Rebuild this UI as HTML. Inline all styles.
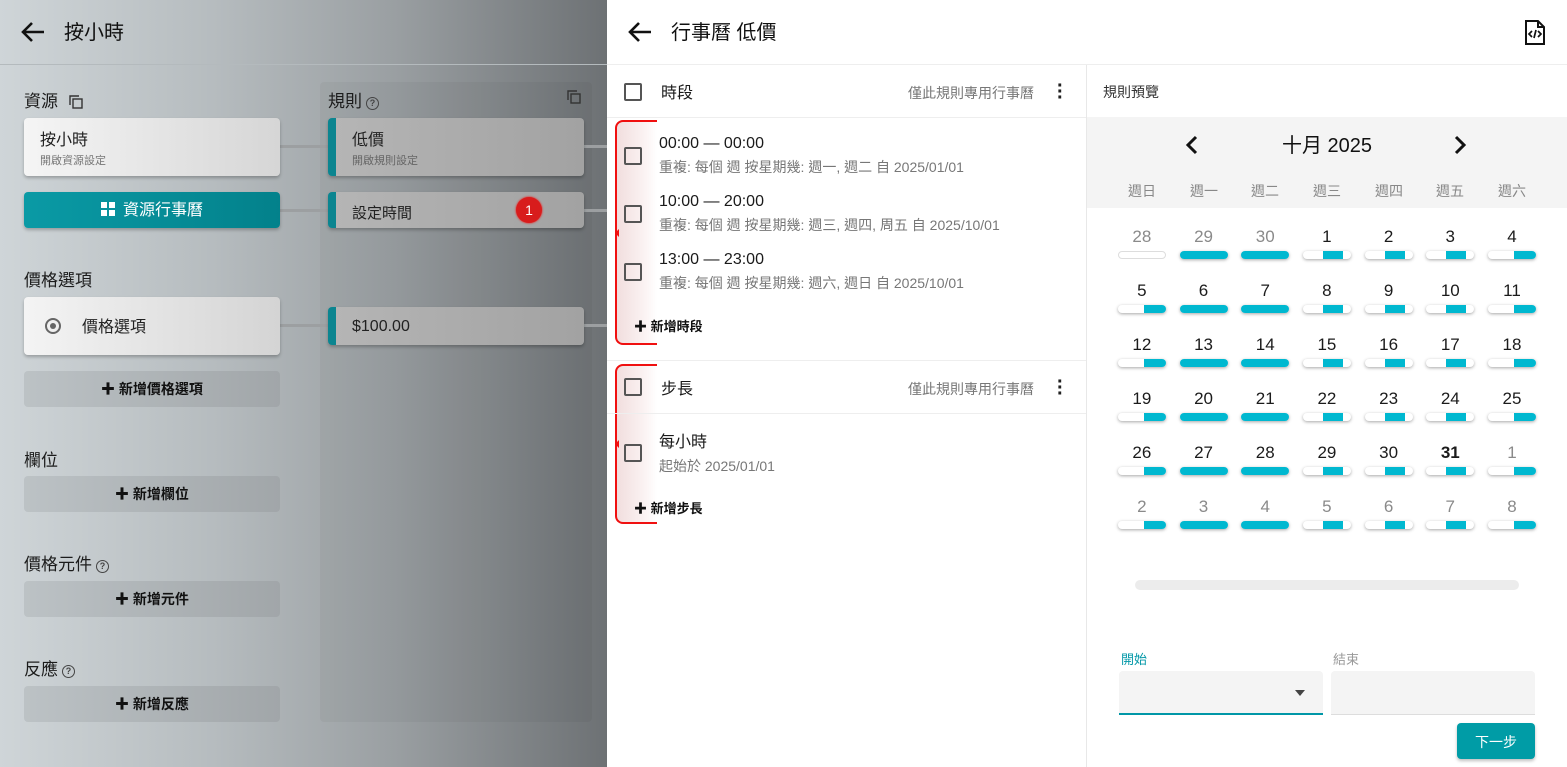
<!DOCTYPE html>
<html><head><meta charset="utf-8"><style>
*{box-sizing:border-box;margin:0;padding:0}
body{width:1567px;height:767px;overflow:hidden;position:relative;font-family:"Liberation Sans","Noto Sans CJK TC",sans-serif;color:#212121;background:#fff;line-height:1.15}
.a{position:absolute}
#left{left:0;top:0;width:607px;height:767px;background:linear-gradient(90deg,#cfd5d8 0%,#b6bcbf 35%,#9a9fa2 65%,#6d7174 100%)}
.card{position:absolute;border-radius:4px;box-shadow:0 2px 3px rgba(0,0,0,.25)}
.rc{background:linear-gradient(90deg,#b5b5b5,#a2a2a2);border-left:8px solid #0b8590}
.btn{position:absolute;left:24px;width:256px;height:36px;border-radius:4px;background:linear-gradient(90deg,#bcc2c5,#a1a6a9);font-size:14px;font-weight:bold;text-align:center;line-height:36px;color:#111}
.lbl{position:absolute;left:24px;font-size:17px;color:#1c1c1c}
.q{display:inline-block;width:13px;height:13px;border:1.5px solid #444;border-radius:50%;font-size:9px;line-height:10px;text-align:center;font-weight:bold;vertical-align:1px;margin-left:4px;color:#444}
.line{position:absolute;height:3px;background:#9c9fa1}
.cb{position:absolute;width:18px;height:18px;border:2px solid #555;border-radius:2px}
.t1{position:absolute;font-size:16px;color:#1a1a1a}
.t2{position:absolute;font-size:14px;color:#777}
.add{position:absolute;font-size:13px;font-weight:bold;color:#111}
.br{position:absolute;left:615px;width:42px;border:2px solid #f01010;border-right:none;border-radius:8px 0 0 8px;background:linear-gradient(90deg,#f1dede,#fbf3f3 70%,rgba(255,255,255,0))}
.br:after{content:"";position:absolute;left:-6px;top:50%;margin-top:-4px;border:4px solid transparent;border-right:4px solid #f01010}
#grid{position:absolute;left:1111px;top:227px;width:432px;display:grid;grid-template-columns:repeat(7,61.7px);grid-auto-rows:54px}
.d{text-align:center;font-size:17px;position:relative;color:#1b1b1b}
.d.o{color:#8a8a8a}
.bar{position:absolute;left:7px;top:24px;width:48px;height:8px;border-radius:4px;background:#fff;box-shadow:0 1px 3px rgba(0,0,0,.35);overflow:hidden}
.bar i{position:absolute;top:0;height:8px;background:#00b8d0}
.F i{left:0;width:48px}.W i{left:20px;width:20px}.S i{left:26px;width:22px}
.E{box-shadow:none;border:1px solid #ddd}
.wd{position:absolute;top:183px;font-size:14px;color:#888;width:62px;text-align:center}
</style></head><body>
<div id="left" class="a">
 <div class="a" style="left:0;top:64px;width:607px;height:1px;background:#b4babd"></div>
 <svg class="a" style="left:20px;top:21px" width="26" height="22" viewBox="0 0 26 22"><path d="M24 11H4M12 2L3 11l9 9" stroke="#111" stroke-width="2.6" fill="none"/></svg>
 <div class="a" style="left:64px;top:22px;font-size:20px;color:#111">按小時</div>
 <div class="a" style="left:320px;top:82px;width:272px;height:640px;background:rgba(0,0,0,.035);border-radius:4px"></div>
 <div class="lbl" style="top:92px">資源 <svg style="vertical-align:-2px;margin-left:6px" width="14" height="14" viewBox="0 0 14 14"><rect x="4" y="4" width="9" height="9" fill="none" stroke="#333" stroke-width="1.4"/><path d="M1 10V1h9" fill="none" stroke="#333" stroke-width="1.4"/></svg></div>
 <div class="lbl" style="left:328px;top:92px">規則<span class="q">?</span></div>
 <svg class="a" style="left:567px;top:90px" width="14" height="14" viewBox="0 0 14 14"><rect x="4" y="4" width="9" height="9" fill="none" stroke="#333" stroke-width="1.4"/><path d="M1 10V1h9" fill="none" stroke="#333" stroke-width="1.4"/></svg>
 <div class="line" style="left:280px;top:145px;width:48px"></div><div class="line" style="left:584px;top:145px;width:23px"></div>
 <div class="line" style="left:280px;top:209px;width:48px"></div><div class="line" style="left:584px;top:209px;width:23px"></div>
 <div class="line" style="left:280px;top:324px;width:48px"></div><div class="line" style="left:584px;top:324px;width:23px"></div>
 <div class="card" style="left:24px;top:118px;width:256px;height:58px;background:linear-gradient(90deg,#f5f5f5,#d6d6d6)"><div class="a" style="left:16px;top:14px;font-size:16px">按小時</div><div class="a" style="left:16px;top:37px;font-size:11px;color:#777">開啟資源設定</div></div>
 <div class="card" style="left:24px;top:192px;width:256px;height:36px;background:linear-gradient(90deg,#0a9aa5,#03818b);color:#fff;text-align:center;line-height:38px;font-size:16px"><span style="display:inline-block;width:14px;height:14px;vertical-align:-1px;margin-right:8px;background:linear-gradient(90deg,#fff 6px,transparent 6px,transparent 8px,#fff 8px);-webkit-mask:linear-gradient(#000 6px,transparent 6px,transparent 8px,#000 8px)"></span>資源行事曆</div>
 <div class="card rc" style="left:328px;top:118px;width:256px;height:58px"><div class="a" style="left:16px;top:14px;font-size:16px">低價</div><div class="a" style="left:16px;top:37px;font-size:11px;color:#666">開啟規則設定</div></div>
 <div class="card rc" style="left:328px;top:192px;width:256px;height:36px"><div class="a" style="left:16px;top:13px;font-size:15px">設定時間</div><div class="a" style="left:180px;top:5px;width:26px;height:26px;border-radius:50%;background:#d81c1c;color:#fff;font-size:14px;text-align:center;line-height:26px;box-shadow:0 0 2px #f00">1</div></div>
 <div class="lbl" style="top:271px">價格選項</div>
 <div class="card" style="left:24px;top:297px;width:256px;height:58px;background:linear-gradient(90deg,#f4f4f4,#d4d4d4)"><div class="a" style="left:21px;top:21px;width:16px;height:16px;border:2px solid #666;border-radius:50%"><div class="a" style="left:3px;top:3px;width:6px;height:6px;border-radius:50%;background:#666"></div></div><div class="a" style="left:58px;top:22px;font-size:16px">價格選項</div></div>
 <div class="card rc" style="left:328px;top:307px;width:256px;height:38px"><div class="a" style="left:16px;top:11px;font-size:16px">$100.00</div></div>
 <div class="btn" style="top:371px">✚ 新增價格選項</div>
 <div class="lbl" style="top:451px">欄位</div>
 <div class="btn" style="top:476px">✚ 新增欄位</div>
 <div class="lbl" style="top:555px">價格元件<span class="q">?</span></div>
 <div class="btn" style="top:581px">✚ 新增元件</div>
 <div class="lbl" style="top:660px">反應<span class="q">?</span></div>
 <div class="btn" style="top:686px">✚ 新增反應</div>
</div>
<!-- right -->
<svg class="a" style="left:627px;top:21px" width="26" height="22" viewBox="0 0 26 22"><path d="M24 11H4M12 2L3 11l9 9" stroke="#111" stroke-width="2.6" fill="none"/></svg>
<div class="a" style="left:671px;top:22px;font-size:20px;color:#111">行事曆 低價</div>
<svg class="a" style="left:1524px;top:20px" width="22" height="25" viewBox="0 0 22 25"><path d="M2 1h12l6 6v17H2z M14 1v6h6" fill="none" stroke="#111" stroke-width="2"/><path d="M8 11l-3 3 3 3M14 11l3 3-3 3M12 10l-2 8" fill="none" stroke="#111" stroke-width="1.7"/></svg>
<div class="a" style="left:607px;top:64px;width:960px;height:1px;background:#eee"></div>
<div class="a" style="left:1086px;top:65px;width:1px;height:702px;background:#e8e8e8"></div>
<div class="br" style="top:120px;height:225px"></div>
<div class="br" style="top:364px;height:160px"></div>
<div class="cb" style="left:624px;top:83px"></div>
<div class="t1" style="left:661px;top:85px">時段</div>
<div class="t2" style="left:908px;top:85px">僅此規則專用行事曆</div>
<div class="a" style="left:1057px;top:83px;font-size:20px;font-weight:bold;line-height:6px;width:4px">·<br>·<br>·</div>
<div class="a" style="left:607px;top:117px;width:479px;height:1px;background:#eee"></div>
<div class="cb" style="left:624px;top:147px"></div><div class="t1" style="left:659px;top:135px">00:00 — 00:00</div><div class="t2" style="left:659px;top:159px">重複: 每個 週 按星期幾: 週一, 週二 自 2025/01/01</div>
<div class="cb" style="left:624px;top:205px"></div><div class="t1" style="left:659px;top:193px">10:00 — 20:00</div><div class="t2" style="left:659px;top:217px">重複: 每個 週 按星期幾: 週三, 週四, 周五 自 2025/10/01</div>
<div class="cb" style="left:624px;top:263px"></div><div class="t1" style="left:659px;top:251px">13:00 — 23:00</div><div class="t2" style="left:659px;top:275px">重複: 每個 週 按星期幾: 週六, 週日 自 2025/10/01</div>
<div class="add" style="left:634px;top:320px">✚ 新增時段</div>
<div class="a" style="left:607px;top:360px;width:479px;height:1px;background:#eee"></div>
<div class="cb" style="left:624px;top:378px"></div>
<div class="t1" style="left:661px;top:381px">步長</div>
<div class="t2" style="left:908px;top:381px">僅此規則專用行事曆</div>
<div class="a" style="left:1057px;top:379px;font-size:20px;font-weight:bold;line-height:6px;width:4px">·<br>·<br>·</div>
<div class="a" style="left:607px;top:413px;width:479px;height:1px;background:#eee"></div>
<div class="cb" style="left:624px;top:444px"></div><div class="t1" style="left:659px;top:434px">每小時</div><div class="t2" style="left:659px;top:458px">起始於 2025/01/01</div>
<div class="add" style="left:634px;top:502px">✚ 新增步長</div>
<!-- calendar -->
<div class="a" style="left:1103px;top:84px;font-size:14px;color:#333">規則預覽</div>
<div class="a" style="left:1087px;top:117px;width:480px;height:91px;background:#f4f4f4"></div>
<svg class="a" style="left:1185px;top:135px" width="14" height="20" viewBox="0 0 14 20"><path d="M11 2L3 10l8 8" stroke="#111" stroke-width="3" fill="none"/></svg>
<svg class="a" style="left:1453px;top:135px" width="14" height="20" viewBox="0 0 14 20"><path d="M3 2l8 8-8 8" stroke="#111" stroke-width="3" fill="none"/></svg>
<div class="a" style="left:1282px;top:135px;font-size:20px;color:#111">十月 2025</div>
<div class="wd" style="left:1111px">週日</div><div class="wd" style="left:1173px">週一</div><div class="wd" style="left:1234px">週二</div><div class="wd" style="left:1296px">週三</div><div class="wd" style="left:1358px">週四</div><div class="wd" style="left:1419px">週五</div><div class="wd" style="left:1481px">週六</div>
<div id="grid">
<div class="d o">28<div class="bar E"></div></div><div class="d o">29<div class="bar F"><i></i></div></div><div class="d o">30<div class="bar F"><i></i></div></div><div class="d">1<div class="bar W"><i></i></div></div><div class="d">2<div class="bar W"><i></i></div></div><div class="d">3<div class="bar W"><i></i></div></div><div class="d">4<div class="bar S"><i></i></div></div>
<div class="d">5<div class="bar S"><i></i></div></div><div class="d">6<div class="bar F"><i></i></div></div><div class="d">7<div class="bar F"><i></i></div></div><div class="d">8<div class="bar W"><i></i></div></div><div class="d">9<div class="bar W"><i></i></div></div><div class="d">10<div class="bar W"><i></i></div></div><div class="d">11<div class="bar S"><i></i></div></div>
<div class="d">12<div class="bar S"><i></i></div></div><div class="d">13<div class="bar F"><i></i></div></div><div class="d">14<div class="bar F"><i></i></div></div><div class="d">15<div class="bar W"><i></i></div></div><div class="d">16<div class="bar W"><i></i></div></div><div class="d">17<div class="bar W"><i></i></div></div><div class="d">18<div class="bar S"><i></i></div></div>
<div class="d">19<div class="bar S"><i></i></div></div><div class="d">20<div class="bar F"><i></i></div></div><div class="d">21<div class="bar F"><i></i></div></div><div class="d">22<div class="bar W"><i></i></div></div><div class="d">23<div class="bar W"><i></i></div></div><div class="d">24<div class="bar W"><i></i></div></div><div class="d">25<div class="bar S"><i></i></div></div>
<div class="d">26<div class="bar S"><i></i></div></div><div class="d">27<div class="bar F"><i></i></div></div><div class="d">28<div class="bar F"><i></i></div></div><div class="d">29<div class="bar W"><i></i></div></div><div class="d">30<div class="bar W"><i></i></div></div><div class="d" style="font-weight:bold">31<div class="bar W"><i></i></div></div><div class="d o">1<div class="bar S"><i></i></div></div>
<div class="d o">2<div class="bar S"><i></i></div></div><div class="d o">3<div class="bar F"><i></i></div></div><div class="d o">4<div class="bar F"><i></i></div></div><div class="d o">5<div class="bar W"><i></i></div></div><div class="d o">6<div class="bar W"><i></i></div></div><div class="d o">7<div class="bar W"><i></i></div></div><div class="d o">8<div class="bar S"><i></i></div></div>
</div>
<div class="a" style="left:1135px;top:580px;width:384px;height:10px;border-radius:5px;background:#ececec"></div>
<div class="a" style="left:1121px;top:653px;font-size:13px;color:#0097a7">開始</div>
<div class="a" style="left:1333px;top:653px;font-size:13px;color:#999">結束</div>
<div class="a" style="left:1119px;top:671px;width:204px;height:44px;background:#f4f4f4;border-radius:4px 4px 0 0;border-bottom:2px solid #0097a7"></div>
<div class="a" style="left:1295px;top:690px;border:5px solid transparent;border-top:6px solid #444"></div>
<div class="a" style="left:1331px;top:671px;width:204px;height:44px;background:#f4f4f4;border-radius:4px 4px 0 0;border-bottom:1px solid #ddd"></div>
<div class="a" style="left:1457px;top:723px;width:78px;height:36px;background:#009ca6;border-radius:4px;color:#fff;font-size:14px;text-align:center;line-height:38px;box-shadow:0 2px 3px rgba(0,0,0,.25)">下一步</div>
</body></html>
